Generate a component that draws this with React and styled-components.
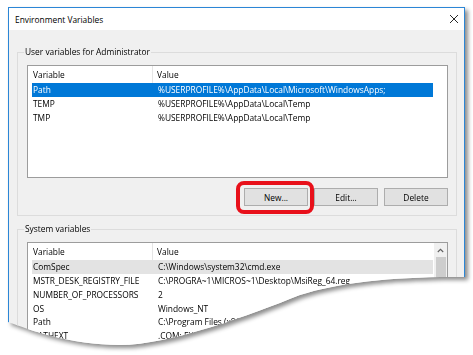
import React from "react";
import styled, { createGlobalStyle } from "styled-components";

const Global = createGlobalStyle`
  html, body { margin: 0; padding: 0; background: #ffffff; }
  body {
    width: 473px; height: 355px; overflow: hidden;
    font-family: "Open Sans", "Noto Sans", sans-serif;
    color: #000;
  }
`;

const FONT = "8.4px";

const Stage = styled.div`
  width: 473px;
  height: 355px;
  box-sizing: border-box;
  padding: 7px 0 0 8px;
  overflow: hidden;
`;

const ShadowWrap = styled.div`
  width: 457px;
  filter: drop-shadow(3px 3px 2px rgba(0, 0, 0, 0.45));
`;

const Dialog = styled.div`
  width: 457px;
  height: 345px;
  box-sizing: border-box;
  border: 1px solid #2b86d6;
  border-bottom: none;
  background: #f0f0f0;
  display: flex;
  flex-direction: column;
  clip-path: path("M0 0 H457 V270 C392 269 332 275 292 288 C242 308 162 338 112 338 C62 338 22 323 0 315 Z");
`;

const TitleBar = styled.div`
  height: 22px;
  flex-shrink: 0;
  background: #ffffff;
  display: flex;
  align-items: center;
  justify-content: space-between;
  padding: 0 5px 0 6px;
`;

const Title = styled.span`
  font-size: ${FONT};
`;

const CloseIcon = styled.svg`
  width: 10px;
  height: 10px;
  display: block;
`;

const Body = styled.div`
  display: flex;
  flex-direction: column;
  gap: 7px;
  padding: 16px 7px 0 8px;
`;

const Group = styled.fieldset`
  margin: 0;
  min-width: 0;
  border: 1px solid #dcdcdc;
  padding: 7px 8px ${(p) => p.$padBottom}px 9px;
`;

const Legend = styled.legend`
  margin-left: -3px;
  padding: 0 1px;
  font-size: ${FONT};
  line-height: 12px;
`;

const ListBox = styled.div`
  height: ${(p) => p.$height}px;
  box-sizing: border-box;
  border: 1px solid #9c9c9c;
  background: #ffffff;
  display: flex;
  overflow: hidden;
`;

const ListMain = styled.div`
  flex: 1;
  display: flex;
  flex-direction: column;
`;

const Header = styled.div`
  height: 17px;
  flex-shrink: 0;
  display: grid;
  grid-template-columns: 125px 1fr;
  font-size: ${FONT};
`;

const HeaderCell = styled.div`
  display: flex;
  align-items: center;
  padding-left: ${(p) => p.$pad}px;
  border-right: ${(p) => (p.$divider ? "1px solid #e5e5e5" : "none")};
`;

const Row = styled.div`
  width: 401px;
  height: 13.75px;
  margin-left: 4px;
  display: grid;
  grid-template-columns: 121px 1fr;
  align-items: center;
  font-size: ${FONT};
  white-space: nowrap;
  background: ${(p) =>
    p.$state === "selected" ? "#0078d7" : p.$state === "inactive" ? "#e3e3e3" : "transparent"};
  color: ${(p) => (p.$state === "selected" ? "#ffffff" : "#000000")};
`;

const Cell = styled.span`
  padding-left: ${(p) => p.$pad}px;
  overflow: hidden;
`;

const ScrollBar = styled.div`
  width: 13px;
  flex-shrink: 0;
  background: #f0f0f0;
  display: flex;
  flex-direction: column;
  align-items: center;
`;

const ScrollArrow = styled.div`
  height: 14px;
  width: 100%;
  display: flex;
  align-items: center;
  justify-content: center;
`;

const ScrollThumb = styled.div`
  width: 10px;
  flex: 1;
  background: #cdcdcd;
`;

const ButtonRow = styled.div`
  margin-top: 10px;
  display: flex;
  justify-content: flex-end;
  gap: 6px;
`;

const Highlight = styled.div`
  position: relative;
  display: flex;
  &::after {
    content: "";
    position: absolute;
    left: -8px;
    right: -6px;
    top: -7px;
    bottom: -8px;
    border: 4px solid #e8101a;
    border-radius: 8px;
    pointer-events: none;
  }
`;

const Button = styled.button`
  width: 64px;
  height: 18px;
  box-sizing: border-box;
  margin: 0;
  padding: 0;
  border: 1px solid #adadad;
  background: #e1e1e1;
  font-family: inherit;
  font-size: ${FONT};
  color: #000;
`;

const userVars = [
  ["Path", "%USERPROFILE%\\AppData\\Local\\Microsoft\\WindowsApps;", "selected"],
  ["TEMP", "%USERPROFILE%\\AppData\\Local\\Temp"],
  ["TMP", "%USERPROFILE%\\AppData\\Local\\Temp"],
];

const sysVars = [
  ["ComSpec", "C:\\Windows\\system32\\cmd.exe", "inactive"],
  ["MSTR_DESK_REGISTRY_FILE", "C:\\PROGRA~1\\MICROS~1\\Desktop\\MsiReg_64.reg"],
  ["NUMBER_OF_PROCESSORS", "2"],
  ["OS", "Windows_NT"],
  ["Path", "C:\\Program Files (x86)\\Common Files\\Oracle\\Java\\javapath"],
  ["PATHEXT", ".COM;.EXE;.BAT;.CMD;.VBS;.VBE;.JS;.JSE;.WSF;.WSH;.MSC"],
];

function VarList({ rows, height, scroll }) {
  return (
    <ListBox $height={height}>
      <ListMain>
        <Header>
          <HeaderCell $pad={5} $divider>Variable</HeaderCell>
          <HeaderCell $pad={4}>Value</HeaderCell>
        </Header>
        {rows.map(([name, value, state]) => (
          <Row key={name + value} $state={state}>
            <Cell $pad={1}>{name}</Cell>
            <Cell $pad={5}>{value}</Cell>
          </Row>
        ))}
      </ListMain>
      {scroll && (
        <ScrollBar>
          <ScrollArrow>
            <svg width="7" height="5" viewBox="0 0 7 5">
              <path d="M0.8 4 L3.5 1.3 L6.2 4" fill="none" stroke="#606060" strokeWidth="1.1" />
            </svg>
          </ScrollArrow>
          <ScrollThumb />
        </ScrollBar>
      )}
    </ListBox>
  );
}

export default function App() {
  return (
    <Stage>
      <Global />
      <ShadowWrap>
        <Dialog>
          <TitleBar>
            <Title>Environment Variables</Title>
            <CloseIcon viewBox="0 0 10 10">
              <path d="M1 1 L9 9 M9 1 L1 9" stroke="#111" strokeWidth="0.9" />
            </CloseIcon>
          </TitleBar>
          <Body>
            <Group $padBottom={9}>
              <Legend>User variables for Administrator</Legend>
              <VarList rows={userVars} height={113} />
              <ButtonRow>
                <Highlight>
                  <Button>New...</Button>
                </Highlight>
                <Button>Edit...</Button>
                <Button>Delete</Button>
              </ButtonRow>
            </Group>
            <Group $padBottom={9}>
              <Legend>System variables</Legend>
              <VarList rows={sysVars} height={140} scroll />
            </Group>
          </Body>
        </Dialog>
      </ShadowWrap>
    </Stage>
  );
}
